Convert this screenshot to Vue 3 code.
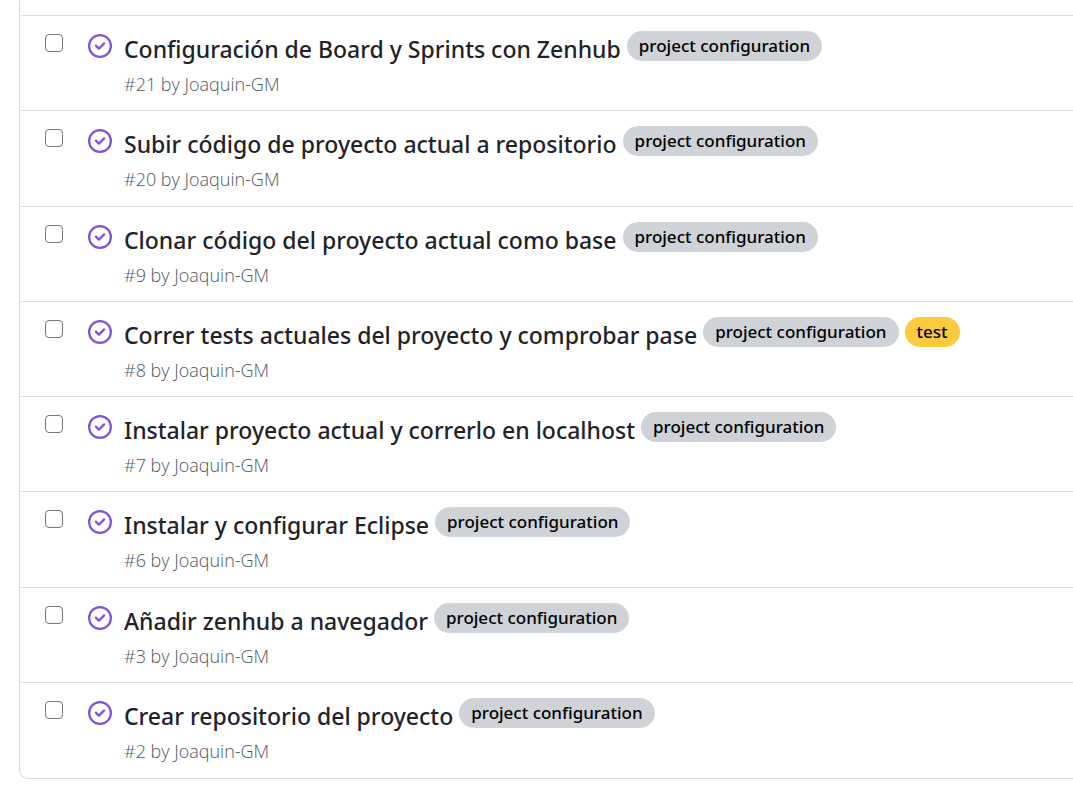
<script setup>
const config = { name: 'project configuration', tone: 'grey' }
const test = { name: 'test', tone: 'yellow' }

const issues = [
  { id: 21, title: 'Configuración de Board y Sprints con Zenhub', labels: [config] },
  { id: 20, title: 'Subir código de proyecto actual a repositorio', labels: [config] },
  { id: 9, title: 'Clonar código del proyecto actual como base', labels: [config] },
  { id: 8, title: 'Correr tests actuales del proyecto y comprobar pase', labels: [config, test] },
  { id: 7, title: 'Instalar proyecto actual y correrlo en localhost', labels: [config] },
  { id: 6, title: 'Instalar y configurar Eclipse', labels: [config] },
  { id: 3, title: 'Añadir zenhub a navegador', labels: [config] },
  { id: 2, title: 'Crear repositorio del proyecto', labels: [config] },
]
</script>

<template>
  <main class="page">
    <ul class="issues">
      <li v-for="issue in issues" :key="issue.id" class="issue">
        <input type="checkbox" class="pick" :aria-label="issue.title" />
        <svg class="state" viewBox="0 0 16 16" aria-hidden="true">
          <path d="M11.28 6.78a.75.75 0 0 0-1.06-1.06L7.25 8.69 5.78 7.22a.75.75 0 0 0-1.06 1.06l2 2a.75.75 0 0 0 1.06 0l3.5-3.5Z" />
          <path d="M16 8A8 8 0 1 1 0 8a8 8 0 0 1 16 0Zm-1.5 0a6.5 6.5 0 1 0-13 0 6.5 6.5 0 0 0 13 0Z" />
        </svg>
        <div class="body">
          <div class="heading">
            <a href="#" class="title">{{ issue.title }}</a>
            <a v-for="label in issue.labels" :key="label.name" href="#" class="label" :class="label.tone">{{ label.name }}</a>
          </div>
          <div class="meta">#{{ issue.id }} by <a href="#" class="author">Joaquin-GM</a></div>
        </div>
      </li>
    </ul>
  </main>
</template>

<style>
body {
  margin: 0;
  background: #fff;
}
</style>

<style scoped>
.page {
  box-sizing: border-box;
  display: flex;
  min-height: 100vh;
  padding: 0 0 14px 19px;
  font-family: "Segoe UI", "Open Sans", "Noto Sans", sans-serif;
}

.issues {
  flex: 1;
  display: grid;
  grid-auto-rows: 1fr;
  margin: 0;
  padding: 15px 0 1px 1px;
  list-style: none;
  border: 1px solid #d0d7de;
  border-width: 0 0 1px 1px;
  border-bottom-left-radius: 9px;
}

.issue {
  display: flex;
  align-items: flex-start;
  border-top: 1px solid #d8dee4;
}

.pick {
  appearance: none;
  box-sizing: border-box;
  flex: none;
  width: 18px;
  height: 18px;
  margin: 18px 0 0 24px;
  border: 1px solid #767676;
  border-radius: 4px;
  background: #fff;
}

.pick:checked {
  background: #0969da;
}

.state {
  flex: none;
  width: 24px;
  height: 24px;
  margin: 18px 12px 0 25px;
  fill: #8250df;
}

.heading {
  display: flex;
  flex-wrap: wrap;
  align-items: flex-start;
  gap: 6px;
  padding-top: 15px;
  font-family: "Segoe UI", "Noto Sans", "Open Sans", sans-serif;
}

.title {
  color: #1f2328;
  font-size: 23px;
  font-weight: 500;
  line-height: 36px;
  text-decoration: none;
}

.label {
  padding: 0 12px;
  border-radius: 15px;
  color: #000;
  font-size: 17px;
  font-weight: 500;
  line-height: 30px;
  text-decoration: none;
}

.grey {
  background: #cfd3d7;
}

.yellow {
  background: #fbca3e;
}

.meta {
  padding-top: 4px;
  color: #50565e;
  font-size: 18px;
  font-weight: 300;
  line-height: 27px;
}

.author {
  color: inherit;
  text-decoration: none;
}
</style>
